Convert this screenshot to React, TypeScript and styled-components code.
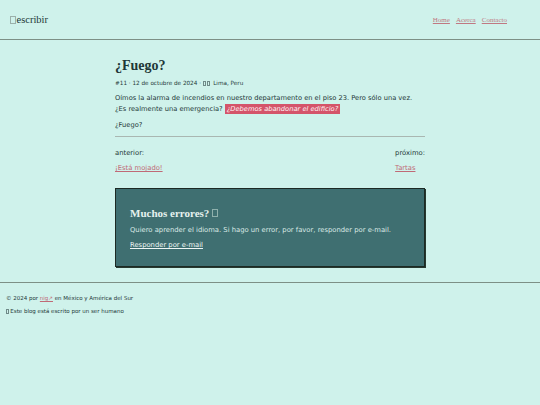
import React from "react";
import styled, { createGlobalStyle } from "styled-components";

const Global = createGlobalStyle`
  html, body { margin: 0; padding: 0; }
  body {
    background: #cff2eb;
    color: #1e3838;
    font-family: "DejaVu Sans", Verdana, sans-serif;
  }
`;

const Header = styled.header`
  height: 39px;
  display: flex;
  align-items: center;
  justify-content: space-between;
  padding: 0 33px 0 10px;
  border-bottom: 1px solid #7d9086;
`;

const Brand = styled.div`
  font-family: "Liberation Serif", "Times New Roman", serif;
  font-size: 10.5px;
  color: #1e3838;
  display: flex;
  align-items: center;
`;

const Tofu = styled.span<{ $size: number; $color?: string }>`
  display: inline-block;
  width: ${(p) => p.$size * 0.55}px;
  height: ${(p) => p.$size * 0.8}px;
  border: 0.6px solid ${(p) => p.$color || "#9bb0aa"};
  box-sizing: border-box;
  margin-right: 1px;
  vertical-align: -1px;
`;

const Nav = styled.nav`
  display: flex;
  gap: 6px;
  font-family: "Liberation Serif", "Times New Roman", serif;
  font-size: 7px;
`;

const NavLink = styled.a`
  color: #c07882;
  text-decoration: underline;
`;

const Main = styled.main`
  width: 310px;
  margin: 0 auto;
  padding-top: 16px;
`;

const Title = styled.h1`
  font-family: "Liberation Serif", "Times New Roman", serif;
  font-weight: bold;
  font-size: 14px;
  line-height: 20px;
  margin: 0;
  color: #1e3838;
`;

const Meta = styled.div`
  font-size: 5.7px;
  line-height: 9px;
  margin-top: 3px;
  display: flex;
  align-items: center;
`;

const Para = styled.p`
  font-size: 6.7px;
  line-height: 11px;
  margin: 5px 0 0;
`;

const Mark = styled.em`
  background: #d4546a;
  color: #fff3f4;
  padding: 1px 2px;
`;

const Rule = styled.hr`
  border: none;
  border-top: 1px solid #a9b7b1;
  margin: 5px 0 0;
`;

const PrevNext = styled.div`
  display: flex;
  justify-content: space-between;
  margin-top: 11px;
  font-size: 6.8px;
`;

const Col = styled.div`
  display: flex;
  flex-direction: column;
  align-items: flex-start;
  gap: 4px;
  line-height: 11px;
`;

const PinkLink = styled.a`
  color: #c06a76;
  text-decoration: underline;
`;

const Callout = styled.section`
  margin-top: 14px;
  background: #3f6f71;
  border: 1px solid #1c2a24;
  box-shadow: 1px 1px 0 #27392f;
  padding: 17px 14px 15px;
  color: #dbeae6;
  font-size: 6.8px;
  line-height: 11px;
`;

const CalloutTitle = styled.h2`
  font-family: "Liberation Serif", "Times New Roman", serif;
  font-weight: bold;
  font-size: 11px;
  line-height: 14px;
  margin: 0;
  color: #e6f2ef;
  display: flex;
  align-items: center;
  gap: 3px;
`;

const CalloutText = styled.p`
  margin: 5px 0 0;
`;

const CalloutLink = styled.a`
  display: inline-block;
  margin-top: 4px;
  color: #eef6f4;
  text-decoration: underline;
`;

const Footer = styled.footer`
  margin-top: 15px;
  border-top: 1px solid #7d9086;
  padding: 9px 6px;
  font-size: 5.5px;
  line-height: 13px;
`;

const SmallLink = styled.a`
  color: #c06a76;
  text-decoration: underline;
`;

export default function App() {
  return (
    <>
      <Global />
      <Header>
        <Brand>
          <Tofu $size={10} />
          escribir
        </Brand>
        <Nav>
          <NavLink href="#">Home</NavLink>
          <NavLink href="#">Acerca</NavLink>
          <NavLink href="#">Contacto</NavLink>
        </Nav>
      </Header>
      <Main>
        <Title>¿Fuego?</Title>
        <Meta>
          #11 · 12 de octubre de 2024 ·&nbsp;<Tofu $size={6} $color="#6f8a88" />
          <Tofu $size={6} $color="#6f8a88" />
          &nbsp;Lima, Peru
        </Meta>
        <Para>
          Oímos la alarma de incendios en nuestro departamento en el piso 23. Pero sólo una vez.
          ¿Es realmente una emergencia? <Mark>¿Debemos abandonar el edificio?</Mark>
        </Para>
        <Para>¿Fuego?</Para>
        <Rule />
        <PrevNext>
          <Col>
            <span>anterior:</span>
            <PinkLink href="#">¡Está mojado!</PinkLink>
          </Col>
          <Col>
            <span>próximo:</span>
            <PinkLink href="#">Tartas</PinkLink>
          </Col>
        </PrevNext>
        <Callout>
          <CalloutTitle>
            Muchos errores? <Tofu $size={10} $color="#8fb0ac" />
          </CalloutTitle>
          <CalloutText>
            Quiero aprender el idioma. Si hago un error, por favor, responder por e-mail.
          </CalloutText>
          <CalloutLink href="#">Responder por e-mail</CalloutLink>
        </Callout>
      </Main>
      <Footer>
        <div>
          © 2024 por <SmallLink href="#">nig↗</SmallLink> en México y América del Sur
        </div>
        <div>
          <Tofu $size={6} $color="#6f8a88" />
          Este blog está escrito por un ser humano
        </div>
      </Footer>
    </>
  );
}
